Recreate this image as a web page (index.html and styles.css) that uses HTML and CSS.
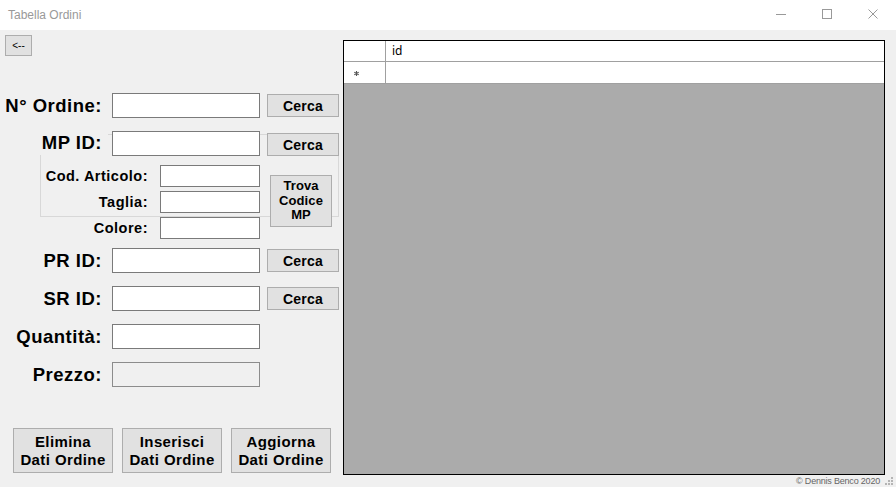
FILE: index.html
```html
<!DOCTYPE html>
<html lang="it">
<head>
<meta charset="utf-8">
<title>Tabella Ordini</title>
<link rel="stylesheet" href="styles.css">
</head>
<body>
<div class="window">
  <header class="titlebar">
    <span class="title">Tabella Ordini</span>
    <div class="controls">
      <span class="ctl"><svg width="10" height="10" viewBox="0 0 10 10"><line x1="0" y1="5.5" x2="10" y2="5.5" stroke="#999" stroke-width="1"/></svg></span>
      <span class="ctl"><svg width="10" height="10" viewBox="0 0 10 10"><rect x="0.5" y="0.5" width="9" height="9" fill="none" stroke="#999" stroke-width="1"/></svg></span>
      <span class="ctl"><svg width="10" height="10" viewBox="0 0 10 10"><path d="M0.5 0.5 L9.5 9.5 M9.5 0.5 L0.5 9.5" stroke="#999" stroke-width="1" fill="none"/></svg></span>
    </div>
  </header>
  <div class="main">
    <section class="form">
      <button class="back">&lt;--</button>

      <div class="row row-order">
        <span class="lbl">N° Ordine:</span>
        <input class="field" type="text">
        <button class="btn search">Cerca</button>
      </div>

      <div class="group">
        <div class="row row-mp">
          <span class="lbl lbl-mp">MP ID:</span>
          <input class="field" type="text">
          <button class="btn search">Cerca</button>
        </div>
        <div class="sub">
          <div class="sub-fields">
            <div class="srow">
              <span class="slbl">Cod. Articolo:</span>
              <input class="sfield" type="text">
            </div>
            <div class="srow">
              <span class="slbl">Taglia:</span>
              <input class="sfield" type="text">
            </div>
          </div>
          <button class="btn trova">Trova<br>Codice<br>MP</button>
        </div>
      </div>

      <div class="srow colore">
        <span class="slbl">Colore:</span>
        <input class="sfield" type="text">
      </div>

      <div class="row row-pr">
        <span class="lbl">PR ID:</span>
        <input class="field" type="text">
        <button class="btn search">Cerca</button>
      </div>

      <div class="row row-next">
        <span class="lbl">SR ID:</span>
        <input class="field" type="text">
        <button class="btn search">Cerca</button>
      </div>

      <div class="row row-next">
        <span class="lbl">Quantità:</span>
        <input class="field" type="text">
      </div>

      <div class="row row-next">
        <span class="lbl">Prezzo:</span>
        <input class="field field-disabled" type="text" readonly>
      </div>

      <div class="actions">
        <button class="btn action">Elimina<br>Dati Ordine</button>
        <button class="btn action">Inserisci<br>Dati Ordine</button>
        <button class="btn action">Aggiorna<br>Dati Ordine</button>
      </div>
    </section>

    <section class="data">
      <div class="grid">
        <div class="grow ghead">
          <div class="rh"></div>
          <div class="cell">id</div>
        </div>
        <div class="grow gnew">
          <div class="rh rh-new"><svg width="5" height="5" viewBox="0 0 5 5"><path d="M2.5 0 V5 M0.3 1.2 L4.7 3.8 M4.7 1.2 L0.3 3.8" stroke="#555" stroke-width="1.1" fill="none"/></svg></div>
          <div class="cell"></div>
        </div>
      </div>
      <footer class="status">
        <span class="copy">© Dennis Benco 2020</span>
        <svg class="grip" width="8" height="8" viewBox="0 0 8 8">
          <rect x="6" y="0" width="2" height="2" fill="#b4b4b4"/>
          <rect x="3" y="3" width="2" height="2" fill="#b4b4b4"/>
          <rect x="6" y="3" width="2" height="2" fill="#b4b4b4"/>
          <rect x="0" y="6" width="2" height="2" fill="#b4b4b4"/>
          <rect x="3" y="6" width="2" height="2" fill="#b4b4b4"/>
          <rect x="6" y="6" width="2" height="2" fill="#b4b4b4"/>
        </svg>
      </footer>
    </section>
  </div>
</div>
</body>
</html>
```

FILE: styles.css
```css
html, body {
  margin: 0;
  padding: 0;
}

body {
  width: 896px;
  height: 487px;
  overflow: hidden;
  background: #f0f0f0;
  font-family: "Liberation Sans", Arial, sans-serif;
  color: #000;
}

.window {
  width: 896px;
  height: 487px;
  display: flex;
  flex-direction: column;
}

/* Title bar */
.titlebar {
  height: 30px;
  flex-shrink: 0;
  background: #fff;
  display: flex;
  align-items: center;
  padding-left: 8px;
}

.title {
  font-size: 12px;
  color: #999;
  line-height: 14px;
  margin-top: -1px;
}

.controls {
  margin-left: auto;
  display: flex;
  height: 30px;
}

.ctl {
  width: 46px;
  height: 30px;
  display: flex;
  align-items: center;
  justify-content: center;
  padding-bottom: 2px;
  box-sizing: border-box;
}

.ctl svg {
  display: block;
}

/* Main */
.main {
  flex: 1;
  display: flex;
  min-height: 0;
}

.form {
  width: 343px;
  flex-shrink: 0;
}

button {
  font-family: "Liberation Sans", Arial, sans-serif;
  color: #000;
  padding: 0;
  margin: 0;
  cursor: default;
  box-sizing: border-box;
}

.btn {
  background: #e1e1e1;
  border: 1px solid #adadad;
  font-weight: bold;
  flex-shrink: 0;
}

.back {
  display: block;
  width: 27px;
  height: 21px;
  margin: 5px 0 0 5px;
  background: #e1e1e1;
  border: 1px solid #adadad;
  font-size: 10px;
  line-height: 18px;
}

input {
  box-sizing: border-box;
  padding: 0;
  margin: 0;
  border: 1px solid #7a7a7a;
  background: #fff;
  border-radius: 0;
  outline: none;
  display: block;
  flex-shrink: 0;
}

/* Main rows */
.row {
  display: flex;
  align-items: center;
  height: 25px;
}

.row-order {
  margin-top: 37px;
}

.row-pr {
  margin-top: 9px;
}

.row-next {
  margin-top: 13px;
}

.lbl {
  width: 102px;
  flex-shrink: 0;
  text-align: right;
  font-weight: bold;
  font-size: 18.5px;
  letter-spacing: 0.5px;
  line-height: 24px;
  white-space: nowrap;
}

.field {
  width: 148px;
  height: 25px;
  margin-left: 10px;
}

.field-disabled {
  background: #f0f0f0;
  border-color: #8c8c8c;
}

.search {
  width: 72px;
  height: 23px;
  margin-left: 7px;
  align-self: flex-start;
  margin-top: 1px;
  font-size: 14px;
  letter-spacing: 0.2px;
  line-height: 20px;
}

/* Group box */
.group {
  margin-top: 16px;
  margin-left: 40px;
  width: 299px;
  box-sizing: border-box;
  border: 1px solid #d8d8d8;
  padding-bottom: 3px;
}

.row-mp {
  margin: -4px -1px 0 -1px;
}

.lbl-mp {
  width: 68px;
  height: 24px;
  padding-right: 6px;
  box-sizing: border-box;
  background: #f0f0f0;
  align-self: flex-start;
}

.row-mp .field {
  margin-left: 4px;
}

.row-mp .search {
  margin-top: 2px;
}

.sub {
  display: flex;
  margin-top: 9px;
}

.srow {
  display: flex;
  align-items: center;
  height: 22px;
}

.srow + .srow {
  margin-top: 4px;
}

.slbl {
  width: 107px;
  flex-shrink: 0;
  text-align: right;
  font-weight: bold;
  font-size: 14.5px;
  letter-spacing: 0.5px;
  line-height: 18px;
  white-space: nowrap;
}

.sfield {
  width: 100px;
  height: 22px;
  margin-left: 12px;
}

.trova {
  width: 62px;
  height: 52px;
  margin: 10px 0 -14px 10px;
  font-size: 13px;
  letter-spacing: 0.1px;
  line-height: 14.5px;
}

.colore {
  margin-left: 41px;
}

/* Bottom actions */
.actions {
  display: flex;
  gap: 9px;
  margin: 41px 0 0 13px;
}

.action {
  width: 100px;
  height: 45px;
  font-size: 15px;
  letter-spacing: 0.4px;
  line-height: 18px;
}

/* Data grid */
.data {
  flex: 1;
  display: flex;
  flex-direction: column;
}

.grid {
  margin-top: 10px;
  width: 542px;
  height: 435px;
  box-sizing: border-box;
  border: 1px solid #000;
  background: #ababab;
  flex-shrink: 0;
}

.grow {
  display: flex;
  background: #fff;
  border-bottom: 1px solid #a0a0a0;
}

.ghead {
  height: 21px;
  box-sizing: border-box;
}

.gnew {
  height: 22px;
  box-sizing: border-box;
}

.rh {
  width: 42px;
  flex-shrink: 0;
  box-sizing: border-box;
  border-right: 1px solid #a0a0a0;
}

.rh-new {
  display: flex;
  align-items: center;
  padding-left: 10px;
  padding-top: 1px;
}

.rh-new svg {
  display: block;
}

.cell {
  flex: 1;
  padding-left: 6px;
  font-family: "Noto Sans", "Liberation Sans", sans-serif;
  font-size: 12px;
  line-height: 20px;
}

/* Status strip */
.status {
  flex: 1;
  display: flex;
  justify-content: flex-end;
  align-items: flex-end;
  padding-right: 3px;
  padding-bottom: 1px;
}

.copy {
  font-size: 9px;
  letter-spacing: -0.2px;
  line-height: 10px;
  color: #666;
  white-space: nowrap;
}

.grip {
  display: block;
  margin-left: 5px;
  margin-bottom: 1px;
}
```
